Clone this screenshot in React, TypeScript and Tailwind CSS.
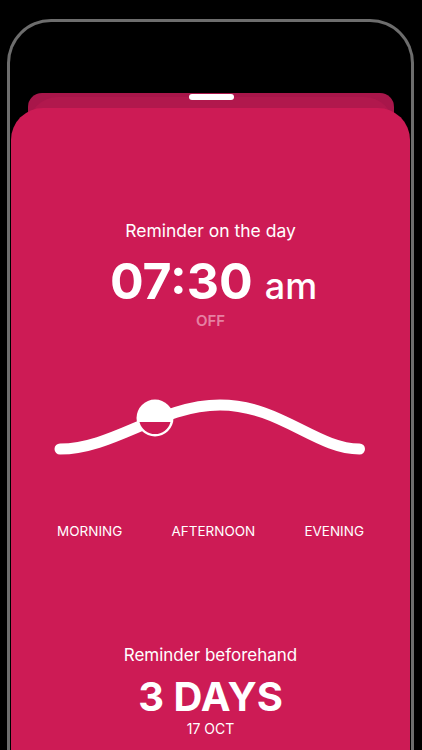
import React from "react";

const labels = ["MORNING", "AFTERNOON", "EVENING"];

// slider curve + knob, drawn in page coordinates via viewBox
const DayCurve = () => (
  <svg
    width={399}
    height={80}
    viewBox="11 390 399 80"
    className="block"
    fill="none"
  >
    <path
      d="M60 450 C 114 450, 160 406, 220 406 C 280 406, 316 450, 359.5 450"
      stroke="#ffffff"
      strokeWidth={11}
      strokeLinecap="round"
    />
    <circle cx={155} cy={419} r={18.5} fill="#ffffff" />
    <path d="M139.5 423 A16 16 0 0 0 170.5 423 Z" fill="#cd1b55" />
  </svg>
);

export default function App() {
  return (
    <div
      className="h-[750px] w-[422px] overflow-hidden bg-black pt-[19px] pl-[7px]"
      style={{ fontFamily: "Inter, 'Noto Sans', sans-serif" }}
    >
      {/* device frame */}
      <div className="h-[760px] w-[407px] rounded-t-[44px] border-[3px] border-b-0 border-[#6d6d6d]">
        {/* stacked sheet behind */}
        <div className="mt-[71px] ml-[18px] mr-[17px] h-[24px] rounded-t-[14px] bg-[#a8164a] pt-[1px]">
          <div className="relative z-10 mx-auto h-[6px] w-[45px] rounded-full bg-white" />
        </div>
        <div className="-mt-[20px] ml-[18px] mr-[17px] h-[30px] rounded-t-[30px] bg-[#b1184d]" />

        {/* front sheet */}
        <div className="-mt-[19px] mx-[1px] flex h-[700px] flex-col items-center rounded-t-[32px] bg-[#cd1b55] pt-[112px] text-white">
          <p className="text-[17.5px] leading-[22px]">Reminder on the day</p>
          <div className="mt-[14px] ml-[6px] flex items-baseline gap-[12px]">
            <span className="text-[50px] font-bold leading-none">07:30</span>
            <span className="text-[36px] font-medium leading-none">am</span>
          </div>
          <p className="mt-[6px] text-[15px] font-semibold leading-[18px] text-[#e680a2]">
            OFF
          </p>

          <div className="mt-[59px]">
            <DayCurve />
          </div>

          <div className="mt-[53px] flex w-full justify-between px-[46px] text-[13.5px] leading-[18px]">
            {labels.map((l) => (
              <span key={l}>{l}</span>
            ))}
          </div>

          <p className="mt-[104px] text-[17px] leading-[22px]">Reminder beforehand</p>
          <p className="mt-[9px] text-[40px] font-bold leading-[44px]">3 DAYS</p>
          <p className="mt-[2px] text-[14px] leading-[16px]">17 OCT</p>
        </div>
      </div>
    </div>
  );
}
